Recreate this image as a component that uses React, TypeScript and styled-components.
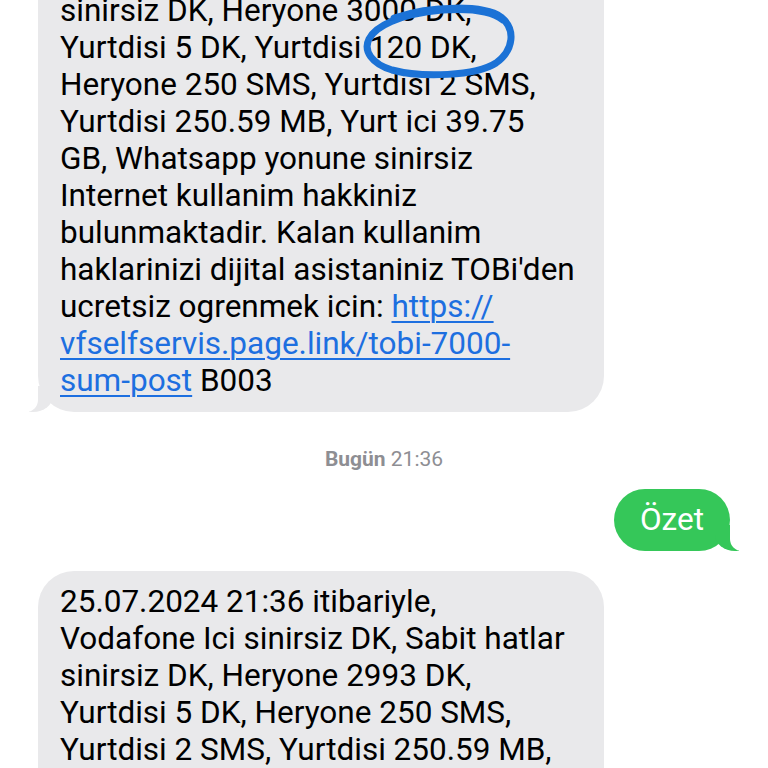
import React from "react";
import styled, { createGlobalStyle } from "styled-components";

const Global = createGlobalStyle`
  html, body { margin: 0; padding: 0; background: #ffffff; }
  body { width: 768px; height: 768px; overflow: hidden; font-family: Roboto, "Noto Sans", sans-serif; }
`;

const Screen = styled.div`
  width: 768px;
  height: 768px;
  overflow: hidden;
  background: #ffffff;
`;

const Thread = styled.div`
  display: flex;
  flex-direction: column;
  margin-top: -94px;
`;

const Row = styled.div<{ $side: "left" | "right" }>`
  display: flex;
  justify-content: ${(p) => (p.$side === "left" ? "flex-start" : "flex-end")};
  padding: ${(p) => (p.$side === "left" ? "0 0 0 38px" : "0 38px 0 0")};
`;

const Bubble = styled.div<{ $side: "left" | "right" }>`
  position: relative;
  box-sizing: border-box;
  border-radius: 36px;
  font-size: 31.5px;
  line-height: 37px;
  letter-spacing: 0;
  background: ${(p) => (p.$side === "left" ? "#e9e9eb" : "#35c759")};
  color: ${(p) => (p.$side === "left" ? "#000000" : "#ffffff")};
  ${(p) =>
    p.$side === "left"
      ? `width: 566px; padding: 12px 20px 13px 22px;`
      : `padding: 12px 26px 13px 26px;`}

  &::before {
    content: "";
    position: absolute;
    bottom: 0;
    height: 26px;
    width: 24px;
    background: ${(p) => (p.$side === "left" ? "#e9e9eb" : "#35c759")};
    ${(p) =>
      p.$side === "left"
        ? `left: -9px; border-bottom-right-radius: 20px 16px;`
        : `right: -9px; border-bottom-left-radius: 20px 16px;`}
  }
  &::after {
    content: "";
    position: absolute;
    bottom: 0;
    height: 26px;
    width: 14px;
    background: #ffffff;
    ${(p) =>
      p.$side === "left"
        ? `left: -14px; border-bottom-right-radius: 12px;`
        : `right: -14px; border-bottom-left-radius: 12px;`}
  }
`;

const Line = styled.div`
  white-space: nowrap;
`;

const Link = styled.a`
  color: #1d6fe0;
  text-decoration: underline;
  text-decoration-thickness: 2px;
  text-underline-offset: 4px;
`;

const Stamp = styled.div`
  text-align: center;
  color: #8e8e93;
  font-size: 21px;
  line-height: 24px;
  padding: 35px 0 18px 0;
  span { font-weight: 700; }
`;

const Spacer = styled.div<{ $h: number }>`
  height: ${(p) => p.$h}px;
`;

const Circle = styled.svg`
  position: absolute;
  left: 350px;
  top: 94px;
  pointer-events: none;
`;

const TopBubbleWrap = styled.div`
  position: relative;
`;

export default function App() {
  return (
    <Screen>
      <Global />
      <Thread>
        <TopBubbleWrap>
          <Row $side="left">
            <Bubble $side="left">
              <Line>25.07.2024 21:36 itibariyle,</Line>
              <Line>Vodafone Ici sinirsiz DK, Sabit hatlar</Line>
              <Line>sinirsiz DK, Heryone 3000 DK,</Line>
              <Line>Yurtdisi 5 DK, Yurtdisi 120 DK,</Line>
              <Line>Heryone 250 SMS, Yurtdisi 2 SMS,</Line>
              <Line>Yurtdisi 250.59 MB, Yurt ici 39.75</Line>
              <Line>GB, Whatsapp yonune sinirsiz</Line>
              <Line>Internet kullanim hakkiniz</Line>
              <Line>bulunmaktadir. Kalan kullanim</Line>
              <Line>haklarinizi dijital asistaniniz TOBi'den</Line>
              <Line>
                ucretsiz ogrenmek icin: <Link>https://</Link>
              </Line>
              <Line>
                <Link>vfselfservis.page.link/tobi-7000-</Link>
              </Line>
              <Line>
                <Link>sum-post</Link> B003
              </Line>
            </Bubble>
          </Row>
          <Circle width="180" height="90" viewBox="350 0 180 90">
            <path
              d="M 394 18 C 432 5, 484 5, 501 17 C 516 29, 514 50, 496 63 C 476 76, 422 78, 392 70 C 372 64, 363 51, 369 39 C 375 27, 398 14, 442 10 C 472 8, 492 11, 503 20"
              fill="none"
              stroke="#1b72d6"
              strokeWidth="7"
              strokeLinecap="round"
              strokeLinejoin="round"
            />
          </Circle>
        </TopBubbleWrap>
        <Stamp>
          <span>Bugün</span> 21:36
        </Stamp>
        <Row $side="right">
          <Bubble $side="right">Özet</Bubble>
        </Row>
        <Spacer $h={20} />
        <Row $side="left">
          <Bubble $side="left">
            <Line>25.07.2024 21:36 itibariyle,</Line>
            <Line>Vodafone Ici sinirsiz DK, Sabit hatlar</Line>
            <Line>sinirsiz DK, Heryone 2993 DK,</Line>
            <Line>Yurtdisi 5 DK, Heryone 250 SMS,</Line>
            <Line>Yurtdisi 2 SMS, Yurtdisi 250.59 MB,</Line>
            <Line>Yurt ici 39.75 GB, Whatsapp yonune</Line>
            <Line>sinirsiz Internet kullanim hakkiniz</Line>
          </Bubble>
        </Row>
      </Thread>
    </Screen>
  );
}
